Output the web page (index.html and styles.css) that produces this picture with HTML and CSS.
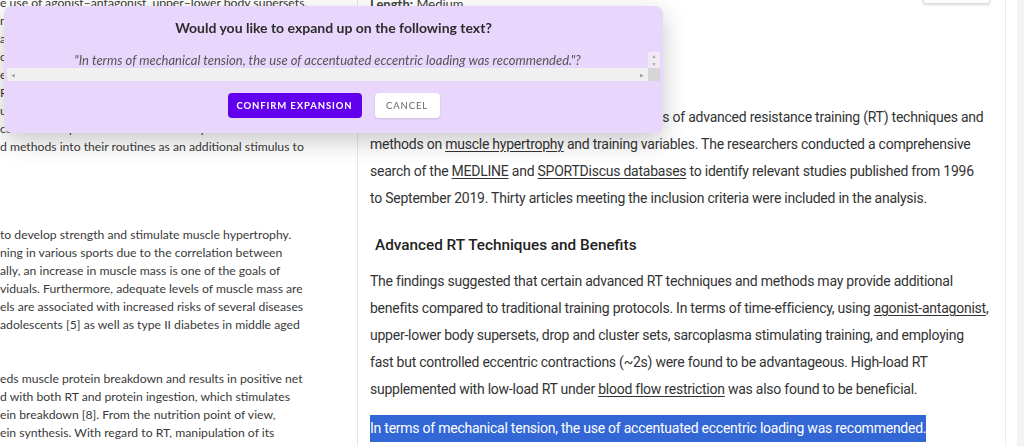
FILE: index.html
```html
<!DOCTYPE html>
<html>

<head>
  <meta name="viewport" content="width=device-width,initial-scale=1.0">
  <title>Summary editor</title>
  <link rel="stylesheet" href="styles.css">
</head>

<body>

  <div class="workspace">
    <section class="source-pane">
      <p class="src-para first">
        e use of agonist–antagonist, upper–lower body supersets,<br>
        nd cluster sets, sarcoplasma stimulating training and<br>
        accentuated eccentric loading were analysed. Coaches<br>
        can incorporate the advanced RT techniques into<br>
        eccentric contractions at around two seconds per<br>
        RT programs while athletes in various sports<br>
        use them as a time-efficient option for the<br>
        coaches and practitioners who can implement<br>
        d methods into their routines as an additional stimulus to
      </p>
      <p class="src-para second">
        to develop strength and stimulate muscle hypertrophy.<br>
        ning in various sports due to the correlation between<br>
        ally, an increase in muscle mass is one of the goals of<br>
        viduals. Furthermore, adequate levels of muscle mass are<br>
        els are associated with increased risks of several diseases<br>
        adolescents [5] as well as type II diabetes in middle aged
      </p>
      <p class="src-para">
        eds muscle protein breakdown and results in positive net<br>
        d with both RT and protein ingestion, which stimulates<br>
        ein breakdown [8]. From the nutrition point of view,<br>
        ein synthesis. With regard to RT, manipulation of its<br>
        ume and frequency of sessions, the repetition speed or type of
      </p>
    </section>

    <main class="article-pane">
      <div class="article-body">
        <div class="meta-row">
          <span class="meta"><b>Length:</b> Medium</span>
          <button class="meta-btn"></button>
        </div>

        <p class="art-para lead">This review was conducted to examine the effects of advanced resistance training (RT) techniques and<br>
          methods on <u>muscle hypertrophy</u> and training variables. The researchers conducted a comprehensive<br>
          search of the <u>MEDLINE</u> and <u>SPORTDiscus databases</u> to identify relevant studies published from 1996<br>
          to September 2019. Thirty articles meeting the inclusion criteria were included in the analysis.</p>

        <h3 class="art-heading">Advanced RT Techniques and Benefits</h3>

        <p class="art-para">The findings suggested that certain advanced RT techniques and methods may provide additional<br>
          benefits compared to traditional training protocols. In terms of time-efficiency, using <u>agonist-antagonist</u>,<br>
          upper-lower body supersets, drop and cluster sets, sarcoplasma stimulating training, and employing<br>
          fast but controlled eccentric contractions (~2s) were found to be advantageous. High-load RT<br>
          supplemented with low-load RT under <u>blood flow restriction</u> was also found to be beneficial.</p>

        <p class="art-para picked"><span class="selection">In terms of mechanical tension, the use of accentuated eccentric loading was recommended.</span></p>
      </div>
    </main>

    <aside class="rail"></aside>
  </div>

  <div class="expand-dialog">
    <h4 class="dlg-title">Would you like to expand up on the following text?</h4>
    <div class="quote-box">
      <div class="quote-text">"In terms of mechanical tension, the use of accentuated eccentric loading was recommended."?</div>
      <div class="vbar"><span class="arr">▲</span><span class="arr">▼</span></div>
      <div class="hbar"><span class="arr">◀</span><span class="arr">▶</span></div>
      <div class="corner"></div>
    </div>
    <div class="dlg-actions">
      <button class="btn-confirm">Confirm expansion</button>
      <button class="btn-cancel">Cancel</button>
    </div>
  </div>

</body>

</html>
```

FILE: styles.css
```css
body {
  margin: 0;
  height: 446px;
  overflow: hidden;
  background: #fff;
  color: #333;
  font-family: Lato, sans-serif;
}

.workspace {
  display: flex;
  height: 446px;
}

.source-pane {
  width: 357px;
  flex-shrink: 0;
  border-right: 1px solid #e6e6e6;
  overflow: hidden;
  font-size: 12.2px;
  line-height: 18px;
  color: #3a3a3a;
}

.src-para {
  margin: -6px 0 0 0;
  white-space: nowrap;
}

.src-para.second {
  margin-top: 70px;
}

.src-para + .src-para:not(.second) {
  margin-top: 36px;
}

.article-pane {
  flex: 1;
  overflow: hidden;
  border-right: 1px solid #ececec;
}

.article-body {
  margin-top: -12px;
  padding: 0 12px 0 12px;
  font-family: Roboto, sans-serif;
}

.meta-row {
  display: flex;
  justify-content: space-between;
  align-items: flex-end;
  height: 24px;
  font-family: Lato, sans-serif;
  font-size: 13px;
  color: #444;
}

.meta-btn {
  width: 67px;
  height: 30px;
  margin-right: 3px;
  margin-bottom: 8px;
  background: #fff;
  border: 1px solid #ddd;
  border-radius: 3px;
  box-shadow: 0 1px 3px rgba(0, 0, 0, 0.15);
}

.art-para {
  margin: 0;
  font-size: 14px;
  letter-spacing: -0.24px;
  line-height: 27px;
  color: #333;
  white-space: nowrap;
}

.art-para.lead {
  margin-top: 92px;
}

.art-para u {
  text-underline-offset: 2px;
}

.art-heading {
  margin: 20px 0 9px 5px;
  font-size: 15.3px;
  line-height: 27px;
  font-weight: 500;
  color: #222;
}

.art-para.picked {
  margin-top: 12px;
}

.selection {
  display: inline-block;
  background: #3367d6;
  color: #fff;
}

.rail {
  width: 18px;
  flex-shrink: 0;
  display: flex;
  justify-content: flex-end;
}

.rail::after {
  content: "";
  width: 7px;
  background: #f2f3f5;
}

/* modal */

.expand-dialog {
  position: fixed;
  top: 6px;
  left: 4px;
  width: 659px;
  height: 127px;
  box-sizing: border-box;
  background: #e8d6fd;
  border-radius: 8px;
  box-shadow: 0 8px 24px rgba(0, 0, 0, 0.22);
  padding: 13px 3px 0 3px;
  font-family: Lato, sans-serif;
}

.dlg-title {
  margin: 0;
  text-align: center;
  font-size: 14px;
  line-height: 18px;
  font-weight: 700;
  color: #2c2c2c;
}

.quote-box {
  display: grid;
  grid-template-columns: 1fr 12px;
  grid-template-rows: 16px 13px;
  margin-top: 15px;
}

.quote-text {
  text-align: center;
  font-size: 13px;
  line-height: 16px;
  font-style: italic;
  color: #555;
  white-space: nowrap;
  overflow: hidden;
}

.vbar {
  display: flex;
  flex-direction: column;
  align-items: center;
  justify-content: space-between;
  background: #efeaf3;
}

.hbar {
  display: flex;
  align-items: center;
  justify-content: space-between;
  padding: 0 4px;
  background: #f0f0f0;
}

.arr {
  font-size: 5px;
  line-height: 8px;
  color: #a3a3a3;
}

.corner {
  background: #d6d6d6;
}

.dlg-actions {
  display: flex;
  justify-content: center;
  gap: 13px;
  margin-top: 12px;
}

.dlg-actions button {
  height: 25px;
  border-radius: 4px;
  font-family: Lato, sans-serif;
  font-size: 9.5px;
  font-weight: 700;
  letter-spacing: 0.9px;
  text-transform: uppercase;
  cursor: pointer;
}

.btn-confirm {
  width: 134px;
  background: #6200ee;
  color: #fff;
  border: none;
}

.btn-cancel {
  width: 65px;
  background: #fff;
  color: #666;
  border: none;
  font-weight: 400 !important;
  box-shadow: 0 1px 2px rgba(0, 0, 0, 0.12);
}
```
